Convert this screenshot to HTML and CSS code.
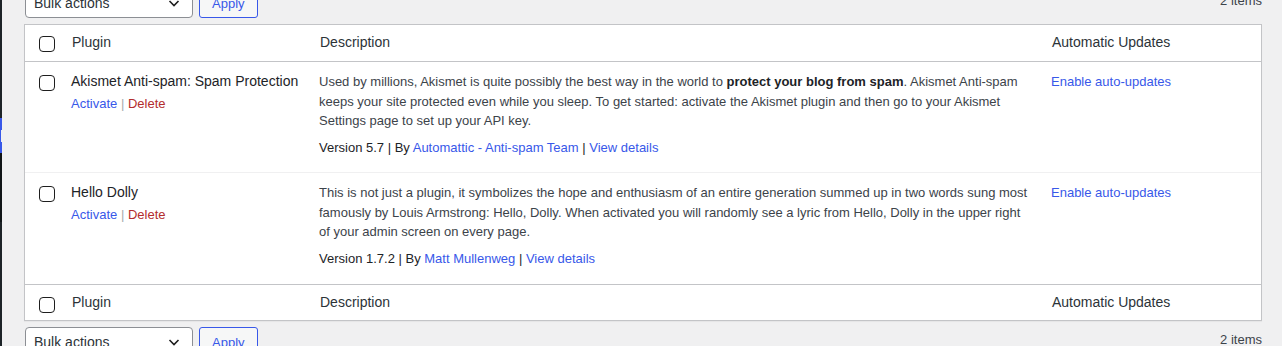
FILE: index.html
```html
<!DOCTYPE html>
<html lang="en">
<head>
  <meta charset="UTF-8">
  <meta name="viewport" content="width=device-width, initial-scale=1.0">
  <title>Plugins</title>
  <link rel="stylesheet" href="styles.css">
</head>
<body>
  <div class="screen">
    <div class="menu-edge">
      <div class="edge-top"></div>
      <div class="edge-current">
        <div class="edge-blue"></div>
        <div class="edge-arrow"></div>
        <div class="edge-blue"></div>
      </div>
      <div class="edge-sub"></div>
      <div class="edge-rest"></div>
    </div>

    <div class="wrap">
      <div class="tablenav top">
        <div class="bulk-select">
          <span>Bulk actions</span>
          <svg width="16" height="16" viewBox="0 0 16 16"><path d="M3.5 6l4.5 4.5 4.5-4.5" fill="none" stroke="#1e1e1e" stroke-width="1.6"/></svg>
        </div>
        <button type="button" class="btn-apply">Apply</button>
        <span class="displaying-num">2 items</span>
      </div>

      <table class="plugins">
        <colgroup>
          <col class="col-check">
          <col class="col-name">
          <col class="col-desc">
          <col>
        </colgroup>
        <thead>
          <tr>
            <th class="check-column"><input type="checkbox"></th>
            <th class="th-name">Plugin</th>
            <th>Description</th>
            <th>Automatic Updates</th>
          </tr>
        </thead>
        <tbody>
          <tr>
            <td class="check-column"><input type="checkbox"></td>
            <td class="plugin-title">
              <strong>Akismet Anti-spam: Spam Protection</strong>
              <div class="row-actions">
                <a href="#">Activate</a> <span class="sep">|</span> <a href="#" class="delete">Delete</a>
              </div>
            </td>
            <td class="plugin-desc">
              <p>Used by millions, Akismet is quite possibly the best way in the world to <strong>protect your blog from spam</strong>. Akismet Anti-spam keeps your site protected even while you sleep. To get started: activate the Akismet plugin and then go to your Akismet Settings page to set up your API key.</p>
              <div class="plugin-version">Version 5.7 | By <a href="#">Automattic - Anti-spam Team</a> | <a href="#">View details</a></div>
            </td>
            <td class="auto-updates"><a href="#">Enable auto-updates</a></td>
          </tr>
          <tr>
            <td class="check-column"><input type="checkbox"></td>
            <td class="plugin-title">
              <strong>Hello Dolly</strong>
              <div class="row-actions">
                <a href="#">Activate</a> <span class="sep">|</span> <a href="#" class="delete">Delete</a>
              </div>
            </td>
            <td class="plugin-desc">
              <p>This is not just a plugin, it symbolizes the hope and enthusiasm of an entire generation summed up in two words sung most famously by Louis Armstrong: Hello, Dolly. When activated you will randomly see a lyric from Hello, Dolly in the upper right of your admin screen on every page.</p>
              <div class="plugin-version">Version 1.7.2 | By <a href="#">Matt Mullenweg</a> | <a href="#">View details</a></div>
            </td>
            <td class="auto-updates"><a href="#">Enable auto-updates</a></td>
          </tr>
        </tbody>
        <tfoot>
          <tr>
            <th class="check-column"><input type="checkbox"></th>
            <th class="th-name">Plugin</th>
            <th>Description</th>
            <th>Automatic Updates</th>
          </tr>
        </tfoot>
      </table>

      <div class="tablenav bottom">
        <div class="bulk-select">
          <span>Bulk actions</span>
          <svg width="16" height="16" viewBox="0 0 16 16"><path d="M3.5 6l4.5 4.5 4.5-4.5" fill="none" stroke="#1e1e1e" stroke-width="1.6"/></svg>
        </div>
        <button type="button" class="btn-apply">Apply</button>
        <span class="displaying-num">2 items</span>
      </div>
    </div>
  </div>
</body>
</html>
```

FILE: styles.css
```css
body {
  margin: 0;
  background-color: #f0f0f1;
  font-family: "Liberation Sans", Arial, sans-serif;
  font-size: 13px;
  color: #3c434a;
  overflow: hidden;
}

a {
  color: #3858e9;
  text-decoration: none;
}

.screen {
  display: flex;
  height: 346px;
}

/* edge of the admin menu */
.menu-edge {
  width: 2px;
  flex-shrink: 0;
  display: flex;
  flex-direction: column;
}

.edge-top {
  height: 118px;
  background-color: #1d2327;
}

.edge-current {
  height: 35px;
  display: flex;
  flex-direction: column;
}

.edge-blue {
  flex: 1;
  background-color: #3858e9;
}

.edge-arrow {
  height: 12px;
  background: linear-gradient(to right, #3858e9 50%, #f0f0f1 50%);
}

.edge-sub {
  height: 69px;
  background-color: #101517;
}

.edge-rest {
  flex: 1;
  background-color: #1d2327;
}

.wrap {
  flex: 1;
  padding: 0 20px 0 22px;
}

/* table navigation */
.tablenav {
  display: flex;
  align-items: flex-start;
  height: 30px;
}

.tablenav.top {
  margin-top: -12px;
  margin-bottom: 6px;
}

.tablenav.bottom {
  margin-top: 6px;
}

.bulk-select {
  box-sizing: border-box;
  width: 168px;
  height: 30px;
  margin-left: 1px;
  padding: 0 10px 0 8px;
  display: flex;
  align-items: center;
  justify-content: space-between;
  background-color: #fff;
  border: 1px solid #8c8f94;
  border-radius: 4px;
  font-size: 14px;
  color: #2c3338;
}

.btn-apply {
  box-sizing: border-box;
  height: 30px;
  margin-left: 6px;
  padding: 0 12px;
  background-color: #f6f7f7;
  border: 1px solid #3858e9;
  border-radius: 3px;
  color: #3858e9;
  font-family: inherit;
  font-size: 13px;
}

.displaying-num {
  margin-left: auto;
  line-height: 26px;
  color: #3c434a;
}

/* plugins table */
.plugins {
  width: 100%;
  table-layout: fixed;
  border-collapse: separate;
  border-spacing: 0;
  background-color: #fff;
  border: 1px solid #c3c4c7;
  box-shadow: 0 1px 1px rgba(0, 0, 0, 0.04);
}

.col-check {
  width: 37px;
}

.col-name {
  width: 247px;
}

.col-desc {
  width: 732px;
}

.plugins th {
  padding: 7px 10px 9px 11px;
  text-align: left;
  font-weight: 400;
  font-size: 14px;
  line-height: 20px;
  color: #2c3338;
}

.plugins th.th-name {
  padding-left: 10px;
}

.plugins thead th {
  border-bottom: 1px solid #c3c4c7;
}

.plugins tfoot th {
  padding-bottom: 8px;
  border-top: 1px solid #c3c4c7;
}

.plugins td {
  padding: 10px 10px 15px;
  vertical-align: top;
  line-height: 1.5;
}

.plugins tbody tr:first-child td {
  border-bottom: 1px solid #f0f0f1;
}

.plugins tbody tr:last-child td {
  padding-bottom: 16px;
}

.plugins .check-column {
  padding: 11px 0 0 14px;
  vertical-align: top;
}

.plugins td.check-column {
  padding-top: 13px;
}

.plugins tfoot .check-column {
  padding-top: 12px;
}

input[type="checkbox"] {
  appearance: none;
  display: block;
  width: 16px;
  height: 16px;
  margin: 0;
  background-color: #fff;
  border: 1px solid #1e1e1e;
  border-radius: 4px;
}

.plugins td.plugin-title {
  padding-left: 9px;
  padding-right: 0;
}

.plugin-title strong {
  display: block;
  margin-top: -1px;
  padding-bottom: 1px;
  font-weight: 400;
  font-size: 14px;
  line-height: 20px;
  color: #1d2327;
}

.row-actions {
  padding-top: 2px;
}

.row-actions .sep {
  color: #a7aaad;
}

.row-actions .delete {
  color: #b32d2e;
}

.plugin-desc p {
  margin: 0;
}

.plugin-desc strong {
  color: #1d2327;
}

.plugin-version {
  margin-top: 7px;
  color: #1d2327;
}

.auto-updates {
  line-height: 1.5;
}
```
